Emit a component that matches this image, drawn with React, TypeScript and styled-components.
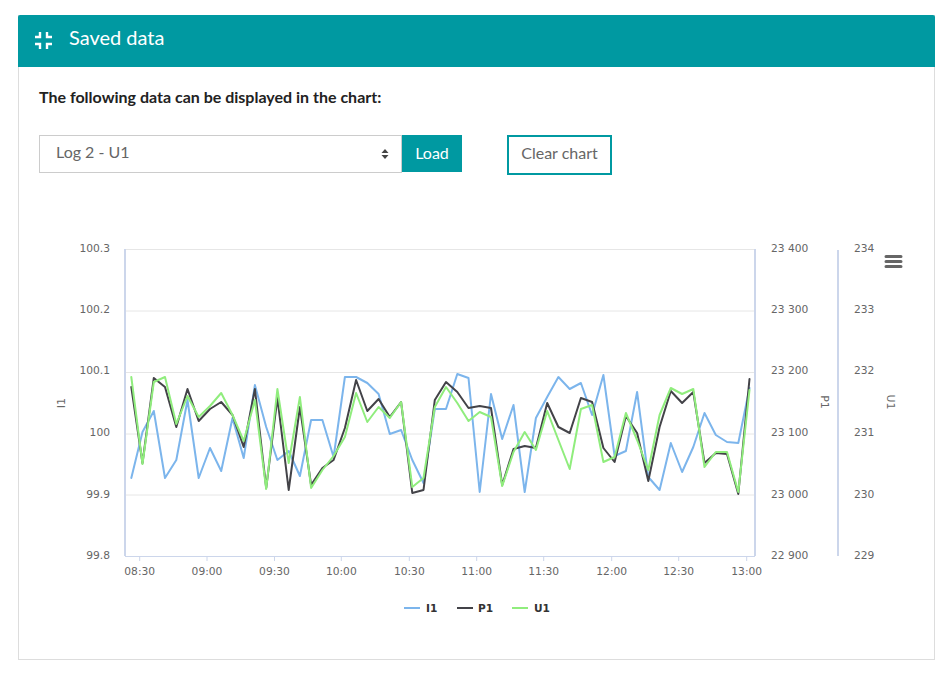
import React from "react";
import styled, { createGlobalStyle } from "styled-components";

const Global = createGlobalStyle`
  html, body { margin: 0; padding: 0; background: #fff; }
  body { font-family: Lato, "Open Sans", sans-serif; }
`;

const Page = styled.div`
  padding: 15px 10px 0 18px;
  width: 917px;
`;
const Panel = styled.section`
  border: 1px solid #ddd;
  border-top: 0;
  height: 645px;
  box-sizing: border-box;
  display: flex;
  flex-direction: column;
`;
const Header = styled.header`
  margin: 0 -1px;
  height: 52px;
  box-sizing: border-box;
  background: #0099a1;
  border-radius: 2px 2px 0 0;
  color: #fff;
  display: flex;
  align-items: center;
  gap: 17px;
  padding: 0 16px 9px 17px;
  font-size: 20px;
  h2 { font: inherit; margin: 0; }
  svg { margin-top: 8px; }
`;
const Content = styled.div`
  padding: 20px 20px 0 20px;
`;
const Lead = styled.p`
  margin: 0;
  font-size: 16px;
  line-height: 20px;
  font-weight: 700;
  color: #222;
`;
const Controls = styled.div`
  display: flex;
  margin-top: 28px;
  align-items: flex-start;
`;
const SelectBox = styled.div`
  width: 363px;
  height: 38px;
  box-sizing: border-box;
  border: 1px solid #ccc;
  display: flex;
  align-items: center;
  justify-content: space-between;
  padding: 0 12px 5px 16px;
  font-size: 16px;
  color: #666;
  svg { margin-top: 5px; }
`;
const LoadButton = styled.button`
  width: 60px;
  height: 37px;
  border: 0;
  padding: 0 0 3px;
  background: #0099a1;
  color: #fff;
  font: 16px Lato, sans-serif;
`;
const ClearButton = styled.button`
  width: 105px;
  height: 40px;
  margin-left: 45px;
  border: 2px solid #0099a1;
  background: #fff;
  padding: 0 0 5px;
  color: #666;
  font: 16px Lato, sans-serif;
`;
const ChartSvg = styled.svg`
  display: block;
  margin: 15px -20px 0;
  width: 915px;
  height: 450px;
  font-family: "DejaVu Sans", sans-serif;
`;

const X0 = 131.3;
const DX = 11.24;
const blue = [478,432,411,478,460,400,478,448,471,418,458,385,427,460,451,476,420,420,457,377,377,383,394,434,430,460,483,409,409,374,378,492,394,439,405,492,418,397,377,389,383,415,375,456,451,392,477,490,443,472,447,413,435,442,443,388];
const black = [387,463,378,387,427,389,421,409,402,415,447,389,488,398,490,407,485,468,460,428,380,411,399,417,402,493,490,400,382,392,408,406,408,485,449,446,448,403,427,433,398,402,448,462,416,433,481,427,391,403,392,463,453,454,494,379];
const green = [377,464,382,377,424,396,417,406,393,415,441,400,489,389,463,397,488,470,456,437,393,422,407,418,402,487,478,407,387,403,421,412,417,486,452,432,450,411,440,469,409,405,462,457,413,440,470,415,388,394,389,467,452,452,492,390];

const toPoints = (ys: number[]) =>
  ys.map((y, i) => `${(X0 + DX * i).toFixed(1)},${y}`).join(" ");

const gridYs = [249.5, 311, 372.5, 434, 495];
const leftLabels = ["100.3", "100.2", "100.1", "100", "99.9", "99.8"];
const midLabels = ["23 400", "23 300", "23 200", "23 100", "23 000", "22 900"];
const rightLabels = ["234", "233", "232", "231", "230", "229"];
const labelYs = [252, 313, 374, 436, 498, 559];
const xTicks: [number, string][] = [
  [139.7, "08:30"], [207, "09:00"], [274.5, "09:30"], [341.3, "10:00"], [409.3, "10:30"],
  [476.7, "11:00"], [543.7, "11:30"], [611.7, "12:00"], [678.7, "12:30"], [746.7, "13:00"],
];
const series: [number[], string][] = [[blue, "#7cb5ec"], [black, "#434348"], [green, "#90ed7d"]];
const legend: [number, number, string, string][] = [
  [404, 426, "I1", "#7cb5ec"],
  [457, 478, "P1", "#434348"],
  [512, 534, "U1", "#90ed7d"],
];

function Chart() {
  return (
    <ChartSvg viewBox="19 190 915 450">
      {gridYs.map((y) => (
        <line key={y} x1={125} x2={755} y1={y} y2={y} stroke="#e6e6e6" />
      ))}
      <line x1={125} x2={755} y1={556.5} y2={556.5} stroke="#ccd6eb" />
      {xTicks.map(([x, t]) => (
        <g key={t}>
          <line x1={x} x2={x} y1={556} y2={561} stroke="#ccd6eb" />
          <text x={x} y={575} textAnchor="middle" fontSize={10.7} fill="#666">{t}</text>
        </g>
      ))}
      <line x1={125} x2={125} y1={249} y2={556} stroke="#ccd6eb" strokeWidth={2} />
      <line x1={755} x2={755} y1={249} y2={556} stroke="#ccd6eb" strokeWidth={2} />
      <line x1={838} x2={838} y1={250} y2={556} stroke="#ccd6eb" strokeWidth={2} />
      {series.map(([ys, c]) => (
        <polyline key={c} points={toPoints(ys)} fill="none" stroke={c} strokeWidth={2} strokeLinejoin="round" strokeLinecap="round" />
      ))}
      {leftLabels.map((t, i) => (
        <text key={t} x={110} y={labelYs[i]} textAnchor="end" fontSize={10.7} fill="#666">{t}</text>
      ))}
      {midLabels.map((t, i) => (
        <text key={t} x={771} y={labelYs[i]} fontSize={10.7} fill="#666">{t}</text>
      ))}
      {rightLabels.map((t, i) => (
        <text key={t} x={854} y={labelYs[i]} fontSize={10.7} fill="#666">{t}</text>
      ))}
      <text transform="translate(61 403) rotate(-90)" textAnchor="middle" dy="4" fontSize={11} fill="#666">I1</text>
      <text transform="translate(825 402) rotate(90)" textAnchor="middle" dy="4" fontSize={11} fill="#666">P1</text>
      <text transform="translate(891 402) rotate(90)" textAnchor="middle" dy="4" fontSize={11} fill="#666">U1</text>
      <path d="M886 256.5H901M886 261.5H901M886 266.5H901" stroke="#666" strokeWidth={3} strokeLinecap="round" />
      {legend.map(([x, tx, t, c]) => (
        <g key={t}>
          <line x1={x} x2={x + 16} y1={608} y2={608} stroke={c} strokeWidth={2} />
          <text x={tx} y={612} fontSize={10.6} fontWeight={700} fill="#333">{t}</text>
        </g>
      ))}
    </ChartSvg>
  );
}

export default function App() {
  return (
    <Page>
      <Global />
      <Panel>
        <Header>
          <svg width="17" height="17" viewBox="0 0 17 17" fill="none" stroke="#fff" strokeWidth="2.4">
            <path d="M0 5H5V0M12 0V5H17M0 12H5V17M12 17V12H17" />
          </svg>
          <h2>Saved data</h2>
        </Header>
        <Content>
          <Lead>The following data can be displayed in the chart:</Lead>
          <Controls>
            <SelectBox>
              <span>Log 2 - U1</span>
              <svg width="8" height="10" viewBox="0 0 8 10" fill="#444">
                <path d="M4 0L7.5 4H0.5ZM4 10L0.5 6H7.5Z" />
              </svg>
            </SelectBox>
            <LoadButton>Load</LoadButton>
            <ClearButton>Clear chart</ClearButton>
          </Controls>
          <Chart />
        </Content>
      </Panel>
    </Page>
  );
}
